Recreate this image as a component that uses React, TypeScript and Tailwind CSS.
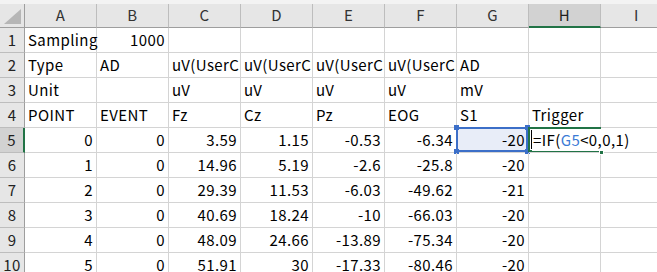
import React from 'react';

const cols = ['A', 'B', 'C', 'D', 'E', 'F', 'G', 'H', 'I'];

type Cell = { v: string; right?: boolean; clip?: boolean };

const L = (v: string): Cell => ({ v });
const N = (v: string | number): Cell => ({ v: String(v), right: true });
const C = (v: string): Cell => ({ v, clip: true });
const E: Cell = { v: '' };

const rows: Cell[][] = [
  [L('Sampling'), N(1000), E, E, E, E, E, E, E],
  [L('Type'), L('AD'), C('uV(UserCh)'), C('uV(UserCh)'), C('uV(UserCh)'), C('uV(UserCh)'), L('AD'), E, E],
  [L('Unit'), E, L('uV'), L('uV'), L('uV'), L('uV'), L('mV'), E, E],
  [L('POINT'), L('EVENT'), L('Fz'), L('Cz'), L('Pz'), L('EOG'), L('S1'), L('Trigger'), E],
  [N(0), N(0), N('3.59'), N('1.15'), N('-0.53'), N('-6.34'), N(-20), E, E],
  [N(1), N(0), N('14.96'), N('5.19'), N('-2.6'), N('-25.8'), N(-20), E, E],
  [N(2), N(0), N('29.39'), N('11.53'), N('-6.03'), N('-49.62'), N(-21), E, E],
  [N(3), N(0), N('40.69'), N('18.24'), N('-10'), N('-66.03'), N(-20), E, E],
  [N(4), N(0), N('48.09'), N('24.66'), N('-13.89'), N('-75.34'), N(-20), E, E],
  [N(5), N(0), N('51.91'), N('30'), N('-17.33'), N('-80.46'), N(-20), E, E],
];

function Handle({ pos }: { pos: string }) {
  return <span className={`absolute w-[5px] h-[5px] bg-[#3c6fc8] ${pos}`} />;
}

export default function App() {
  return (
    <div
      className="w-[657px] h-[272px] overflow-hidden bg-white text-[15px] tracking-[0.4px] text-black"
      style={{ fontFamily: "'Noto Sans CJK JP', 'Noto Sans', sans-serif" }}
    >
      <div className="h-[4px] bg-[#f3f3f3]" />
      <div className="grid grid-cols-[25px_repeat(9,72px)] grid-rows-[24px_repeat(10,25px)] w-max">
        {/* corner */}
        <div className="relative bg-[#e6e6e6] border-r border-b border-[#9e9e9e]">
          <svg className="absolute right-[3px] bottom-[3px]" width="17" height="15" viewBox="0 0 17 15">
            <polygon points="17,0 17,15 0,15" fill="#b6b6b6" />
          </svg>
        </div>
        {cols.map((c) => (
          <div
            key={c}
            className={
              c === 'H'
                ? 'flex items-center justify-center bg-[#d2d2d2] border-r border-[#bdbdbd] border-b-2 border-b-[#217346] text-[#1f1f1f]'
                : 'flex items-center justify-center bg-[#e6e6e6] border-r border-[#bdbdbd] border-b border-b-[#9e9e9e] text-[#333]'
            }
          >
            {c}
          </div>
        ))}
        {rows.map((r, i) => (
          <React.Fragment key={i}>
            <div
              className={
                i === 4
                  ? 'flex items-center justify-center bg-[#d2d2d2] border-b border-[#bdbdbd] border-r-2 border-r-[#217346] text-[#1f1f1f]'
                  : 'flex items-center justify-center bg-[#e6e6e6] border-b border-[#bdbdbd] border-r border-r-[#9e9e9e] text-[#222]'
              }
            >
              {i + 1}
            </div>
            {r.map((cell, j) => {
              const isG5 = i === 4 && j === 6;
              const isH5 = i === 4 && j === 7;
              return (
                <div
                  key={j}
                  className={`relative flex items-center border-r border-b border-[#d4d4d4] px-[3px] whitespace-nowrap ${
                    cell.right ? 'justify-end' : 'justify-start'
                  } ${cell.clip ? 'overflow-hidden' : ''} ${isG5 ? 'bg-[#e8edf8]' : ''} ${isH5 ? 'z-10' : ''}`}
                >
                  {isG5 && (
                    <div className="absolute left-[-1px] top-[-1px] w-[72px] h-[25px] border-2 border-[#3c6fc8]">
                      <Handle pos="left-[-4px] top-[-4px]" />
                      <Handle pos="right-[-4px] top-[-4px]" />
                      <Handle pos="left-[-4px] bottom-[-4px]" />
                      <Handle pos="right-[-4px] bottom-[-4px]" />
                    </div>
                  )}
                  {isH5 ? (
                    <>
                      <div className="absolute left-[-1px] top-[-1px] w-[73px] h-[25px] border-2 border-[#217346]" />
                      <span className="absolute right-[-4px] bottom-[-3px] w-[5px] h-[5px] bg-[#217346] border border-white" />
                      <span className="absolute left-[2px] top-[2px] w-px h-[19px] bg-black" />
                      <span className="relative pl-[1px] bg-white pr-1">
                        =IF(<span className="text-[#3b7bd6]">G5</span>&lt;0,0,1)
                      </span>
                    </>
                  ) : (
                    <span className={isG5 ? 'relative' : ''}>{cell.v}</span>
                  )}
                </div>
              );
            })}
          </React.Fragment>
        ))}
      </div>
    </div>
  );
}
